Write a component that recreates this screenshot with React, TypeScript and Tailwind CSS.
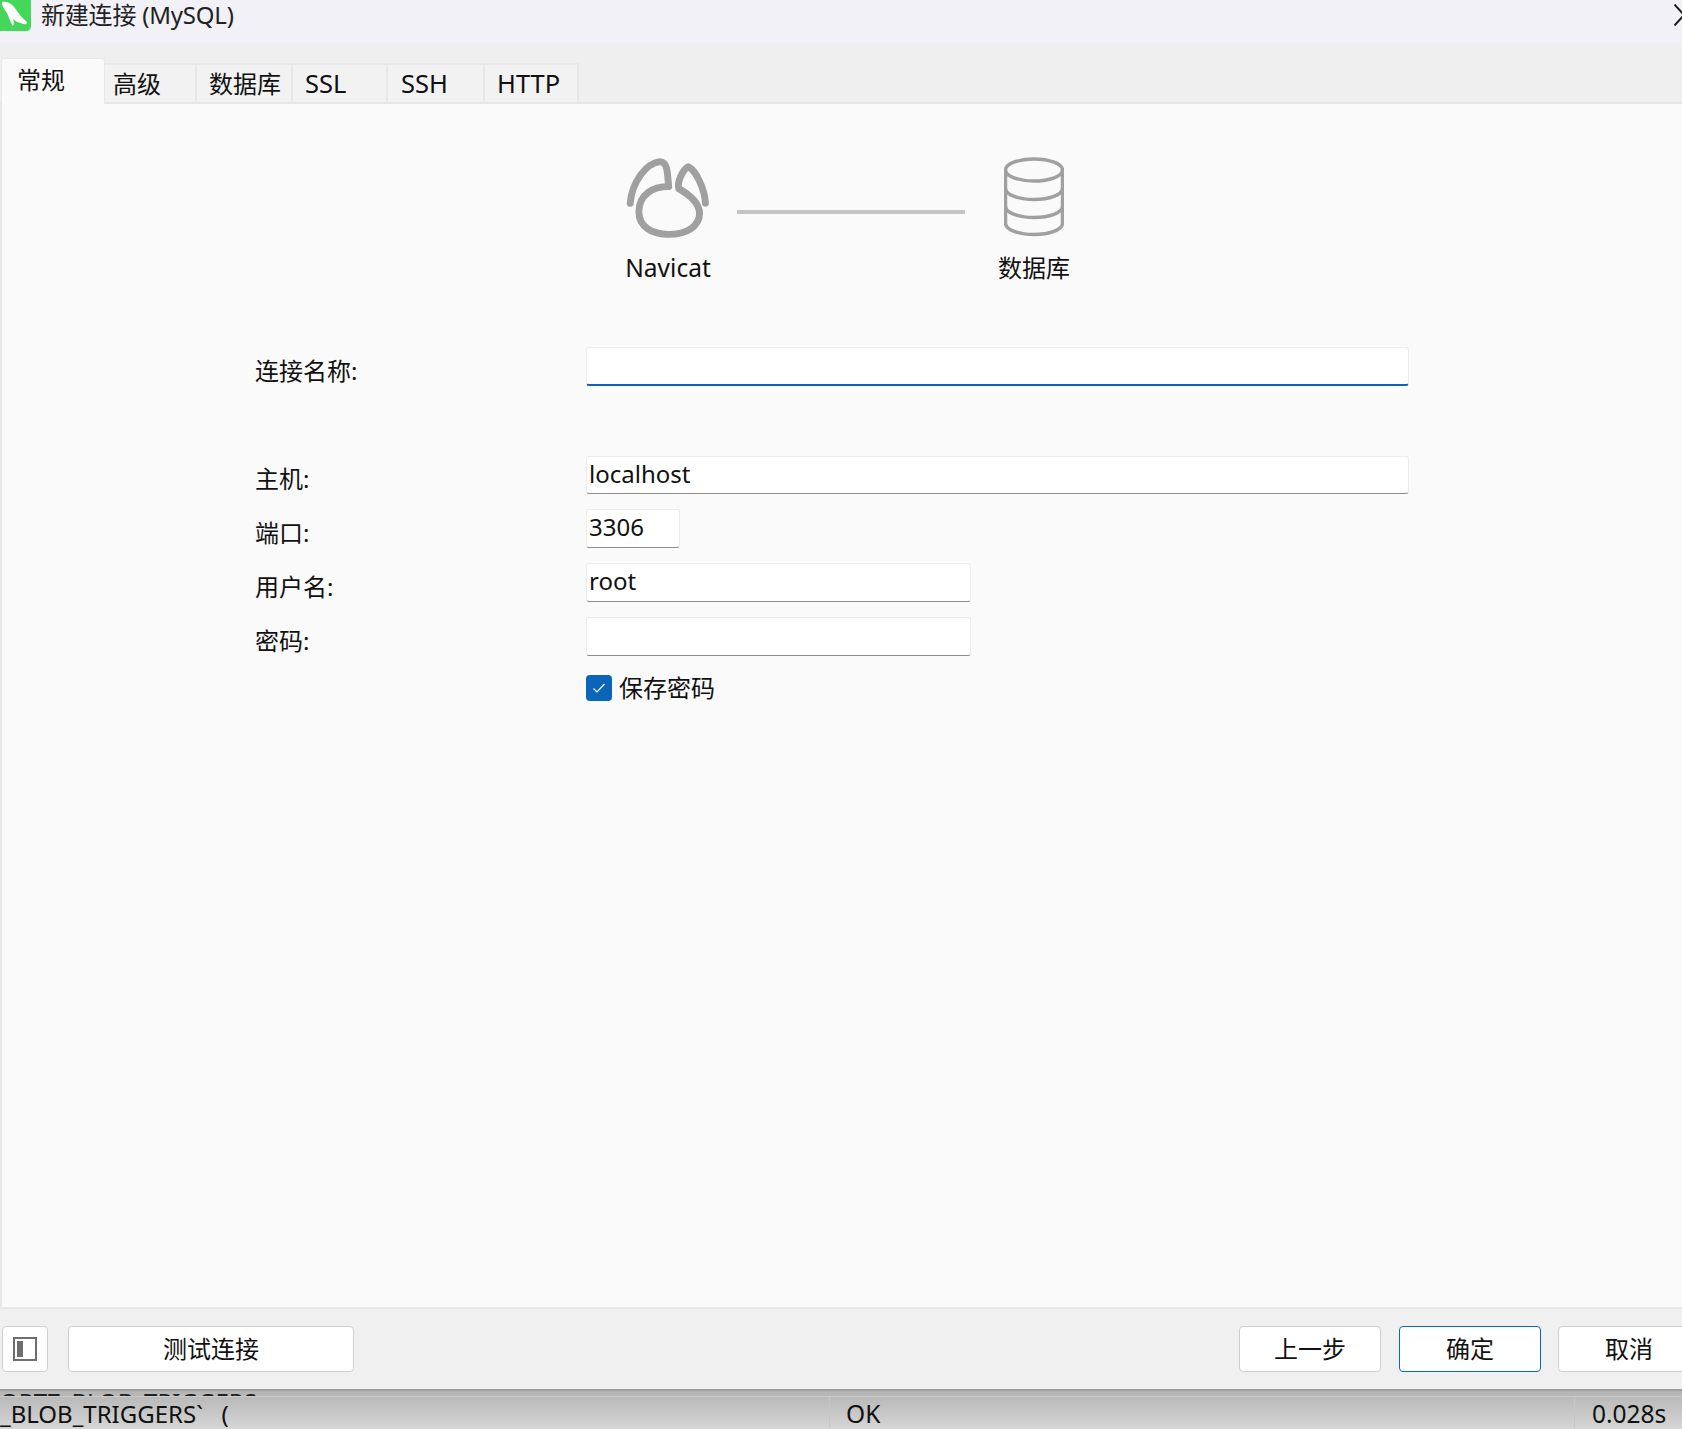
import React from "react"

const tabs = [
  { label: "高级", width: "w-[92px]", pad: "pl-[8px]", size: "text-[24px]" },
  { label: "数据库", width: "w-[96px]", pad: "pl-[12px]", size: "text-[24px]" },
  { label: "SSL", width: "w-[95px]", pad: "pl-[12px]", size: "text-[25.5px]" },
  { label: "SSH", width: "w-[97px]", pad: "pl-[13px]", size: "text-[25.5px]" },
  { label: "HTTP", width: "w-[94px]", pad: "pl-[12px]", size: "text-[25.5px]" }
]

const inputClass =
  "h-full w-full rounded-[3px] border border-[#ececec] border-b-[#8d8d8d] bg-white px-[2px] pb-[4px] text-[24px] text-[#111] outline-none"

const NavicatIcon = () => (
  <svg width="104" height="94" viewBox="24 0 300 270" fill="none" className="-mx-[7px] block">
    <path
      d="M65 150C70 90 110 35 150 30C175 30 172 70 176 102C130 102 90 125 90 175C90 220 130 240 175 240C230 240 265 215 265 180C265 150 235 125 205 108C200 90 215 55 232 45C255 55 280 110 282 150"
      stroke="#a0a0a0"
      strokeWidth="20"
      strokeLinecap="round"
      strokeLinejoin="round"
    />
  </svg>
)

const DatabaseIcon = () => (
  <svg width="60" height="80" viewBox="0 0 60 80" fill="none" className="block">
    <ellipse cx="30" cy="13" rx="28.5" ry="11" stroke="#a0a0a0" strokeWidth="3.5" />
    <path
      d="M1.5 13V66C1.5 73 15 77.500 30 77.500C45 77.500 58.500 73 58.500 66V13M1.500 31C1.500 38 15 42.500 30 42.500C45 42.500 58.500 38 58.500 31M1.500 49C1.500 56 15 60.500 30 60.500C45 60.500 58.500 56 58.500 49"
      stroke="#a0a0a0"
      strokeWidth="3.5"
    />
  </svg>
)

const FormRow = ({ label, children, className }: { label: string; children: React.ReactNode; className: string }) => (
  <div className={`flex items-center ${className}`}>
    <div className="w-[331px] pt-[8px] text-[24px] leading-[30px] text-[#111]">{label}</div>
    {children}
  </div>
)

const FooterButton = ({ label, width, focus }: { label: string; width: string; focus?: boolean }) => (
  <button
    className={`h-[46px] shrink-0 rounded-[4px] border bg-white text-[24px] text-[#111] ${width} ${
      focus ? "border-[#0a68c0]" : "border-[#cfcfcf]"
    }`}
  >
    {label}
  </button>
)

const App = () => {
  return (
    <div className="flex h-[1429px] w-[1682px] flex-col overflow-hidden bg-[#fafafa] font-['Noto_Sans','Noto_Sans_CJK_SC',sans-serif]">
      <div className="flex h-[43px] shrink-0 items-start bg-[#f3f1f8]">
        <svg width="31" height="31" viewBox="0 0 31 31" className="block shrink-0">
          <path d="M0 0H31V26Q31 31 26 31H0Z" fill="#45d75a" />
          <path
            d="M2 2C7 1 11 3 14 7C18 12 20 16 26 21C28 23 27 25 24 24C20 23 16 22 13 19C14 22 14 24 13 26C10 22 9 17 7 13C5 10 2 7 2 2Z"
            fill="#ffffff"
          />
        </svg>
        <div className="ml-[10px] text-[24px] leading-[30px] tracking-[-0.2px] text-[#222]">新建连接 (MySQL)</div>
        <svg width="8" height="22" viewBox="0 0 8 22" fill="none" className="mt-[4px] ml-auto block">
          <path d="M0.5 0.5L10 11L0.5 21.500" stroke="#1c1c1c" strokeWidth="2" />
        </svg>
      </div>

      <div className="flex h-[61px] shrink-0 items-end border-b-2 border-[#e6e6e6] bg-[#efefef] pl-[1px]">
        <div className="relative z-10 -mb-[2px] h-[46px] w-[104px] rounded-t-[3px] border border-b-0 border-[#e8e8e8] bg-[#fafafa] pt-[1px] pl-[15px] text-[24px] leading-[40px] text-[#111]">
          常规
        </div>
        {tabs.map(tab => (
          <div
            key={tab.label}
            className={`h-[39px] border-t-2 border-r-2 border-[#e8e8e8] bg-[#f2f2f2] leading-[37px] text-[#111] ${tab.size} ${tab.width} ${tab.pad}`}
          >
            {tab.label}
          </div>
        ))}
      </div>

      <div className="flex min-h-0 flex-1 flex-col border-b-2 border-l-2 border-[#e8e8e8] bg-[#fafafa] pt-[47px]">
        <div className="flex items-start pl-[621px]">
          <div className="flex w-[90px] flex-col items-center">
            <NavicatIcon />
            <div className="mt-[7px] text-[24.5px] leading-[32px] text-[#111]">Navicat</div>
          </div>
          <div className="mx-[24px] mt-[59px] h-[4px] w-[228px] bg-[#c4c4c4]" />
          <div className="flex w-[90px] flex-col items-center">
            <div className="pt-[6px] pb-[15px]">
              <DatabaseIcon />
            </div>
            <div className="text-[24px] leading-[32px] text-[#111]">数据库</div>
          </div>
        </div>

        <div className="mt-[63px] flex flex-col pl-[253px]">
          <FormRow label="连接名称:" className="mb-[70px] h-[39px]">
            <input
              readOnly
              className="h-full w-[823px] rounded-[3px] border border-b-2 border-[#ececec] border-b-[#0a64b8] bg-white px-[2px] text-[24px] outline-none"
            />
          </FormRow>
          <FormRow label="主机:" className="mb-[15px] h-[38px]">
            <div className="h-full w-[823px]">
              <input readOnly value="localhost" className={inputClass} />
            </div>
          </FormRow>
          <FormRow label="端口:" className="mb-[15px] h-[39px]">
            <div className="h-full w-[94px]">
              <input readOnly value="3306" className={inputClass} />
            </div>
          </FormRow>
          <FormRow label="用户名:" className="mb-[15px] h-[39px]">
            <div className="h-full w-[385px]">
              <input readOnly value="root" className={inputClass} />
            </div>
          </FormRow>
          <FormRow label="密码:" className="mb-[16px] h-[39px]">
            <div className="h-full w-[385px]">
              <input readOnly className={inputClass} />
            </div>
          </FormRow>
          <div className="flex items-center pl-[331px]">
            <div className="flex h-[26px] w-[26px] items-center justify-center rounded-[4px] bg-[#0a64b8]">
              <svg width="14" height="12" viewBox="0 0 14 12" fill="none">
                <path d="M1.500 6.500L5 10L12.500 2" stroke="#ffffff" strokeWidth="1.200" />
              </svg>
            </div>
            <div className="ml-[7px] text-[24px] leading-[32px] text-[#111]">保存密码</div>
          </div>
        </div>
      </div>

      <div className="flex h-[80px] shrink-0 items-start bg-[#f0f0f0] pt-[17px] pl-[2px]">
        <button className="flex h-[46px] w-[46px] shrink-0 items-center justify-center rounded-[4px] border border-[#cfcfcf] bg-white">
          <span className="block h-[24px] w-[24px] border-2 border-[#6e6e6e] p-[2px]">
            <span className="block h-full w-[6px] bg-[#6e6e6e]" />
          </span>
        </button>
        <div className="ml-[20px]">
          <FooterButton label="测试连接" width="w-[286px]" />
        </div>
        <div className="ml-auto flex -mr-[18px]">
          <FooterButton label="上一步" width="w-[142px]" />
          <div className="ml-[18px]">
            <FooterButton label="确定" width="w-[142px]" focus />
          </div>
          <div className="ml-[17px]">
            <FooterButton label="取消" width="w-[142px]" />
          </div>
        </div>
      </div>

      <div className="h-[40px] shrink-0 overflow-hidden border-t-2 border-[#9e9e9e] bg-gradient-to-b from-[#b4b4b4] to-[#d6d6d6] text-[24px] text-[#111]">
        <div className="h-[6px] overflow-hidden border-b border-[#cacaca] leading-[22px] text-[#222]">ORTZ_BLOB_TRIGGERS</div>
        <div className="flex h-[32px] leading-[34px]">
          <div className="w-[830px] shrink-0 border-r border-[#c6c6c6] whitespace-pre">_BLOB_TRIGGERS`   (</div>
          <div className="w-[745px] shrink-0 border-r border-[#c6c6c6] pl-[16px] text-[24.5px]">OK</div>
          <div className="pl-[17px] text-[24.5px]">0.028s</div>
        </div>
      </div>
    </div>
  )
}

export default App
